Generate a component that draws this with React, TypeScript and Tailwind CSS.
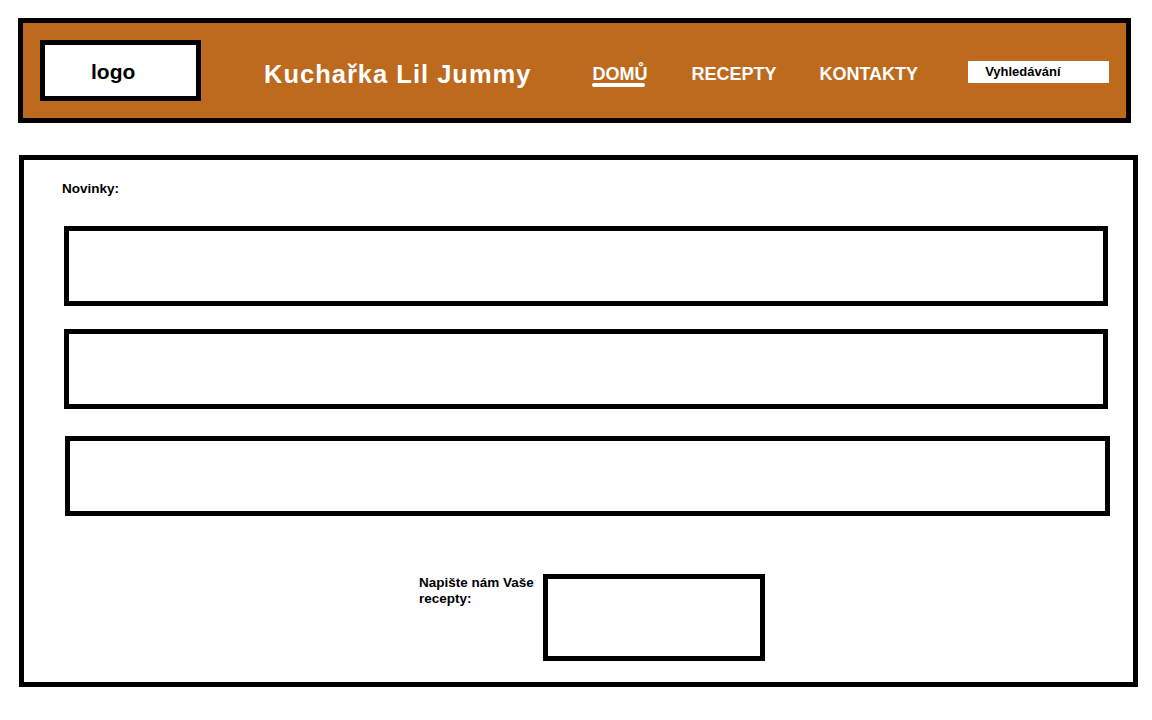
import React from "react";

const font = { fontFamily: '"Liberation Sans", Arial, sans-serif' };

const NewsBox = ({ className }: { className: string }) => (
	<div className={"h-[80px] border-[5px] border-black bg-white " + className} />
);

const App = () => {
	return (
		<div className="w-[1152px] h-[720px] bg-white pt-[18px]" style={font}>
			{/* header */}
			<header className="ml-[18px] flex h-[105px] w-[1113px] items-start border-[5px] border-black bg-[#be6a1e]">
				<div className="ml-[17px] mt-[17px] h-[61px] w-[161px] border-[5px] border-black bg-white pl-[46px] pt-px">
					<span className="block text-[21px] font-bold leading-[51px] text-black">logo</span>
				</div>
				<h1 className="ml-[63px] mt-[37px] text-[25.5px] font-bold leading-[29px] tracking-[1px] text-white">
					Kuchařka Lil Jummy
				</h1>
				<nav className="flex items-start">
					<a href="#" className="ml-[61px] mt-[41px] flex flex-col text-[18px] font-bold leading-[21px] text-white">
						DOMŮ
						<span className="-mt-[2px] h-[4px] w-[53px] rounded-full bg-white" />
					</a>
					<a href="#" className="ml-[44px] mt-[41px] text-[18px] font-bold leading-[21px] text-white">
						RECEPTY
					</a>
					<a href="#" className="ml-[43px] mt-[41px] text-[18px] font-bold leading-[21px] text-white">
						KONTAKTY
					</a>
				</nav>
				<div className="ml-[50px] mt-[38px] h-[22px] w-[141px] bg-white pl-[17px] text-[13px] font-bold leading-[22px] text-black">
					Vyhledávání
				</div>
			</header>

			{/* main */}
			<main className="ml-[19px] mt-[32px] h-[532px] w-[1119px] border-[5px] border-black bg-white pt-[21px]">
				<h2 className="ml-[38px] text-[13.5px] font-bold leading-[16px] text-black">Novinky:</h2>
				<NewsBox className="ml-[40px] mt-[29px] w-[1044px]" />
				<NewsBox className="ml-[40px] mt-[23px] w-[1044px]" />
				<NewsBox className="ml-[41px] mt-[27px] w-[1045px]" />
				<div className="ml-[395px] mt-[58px] flex items-start">
					<p className="mt-px w-[124px] text-[13.5px] font-bold leading-[16px] text-black">
						Napište nám Vaše
						<br />
						recepty:
					</p>
					<div className="h-[87px] w-[222px] border-[5px] border-black bg-white" />
				</div>
			</main>
		</div>
	);
};

export default App;
